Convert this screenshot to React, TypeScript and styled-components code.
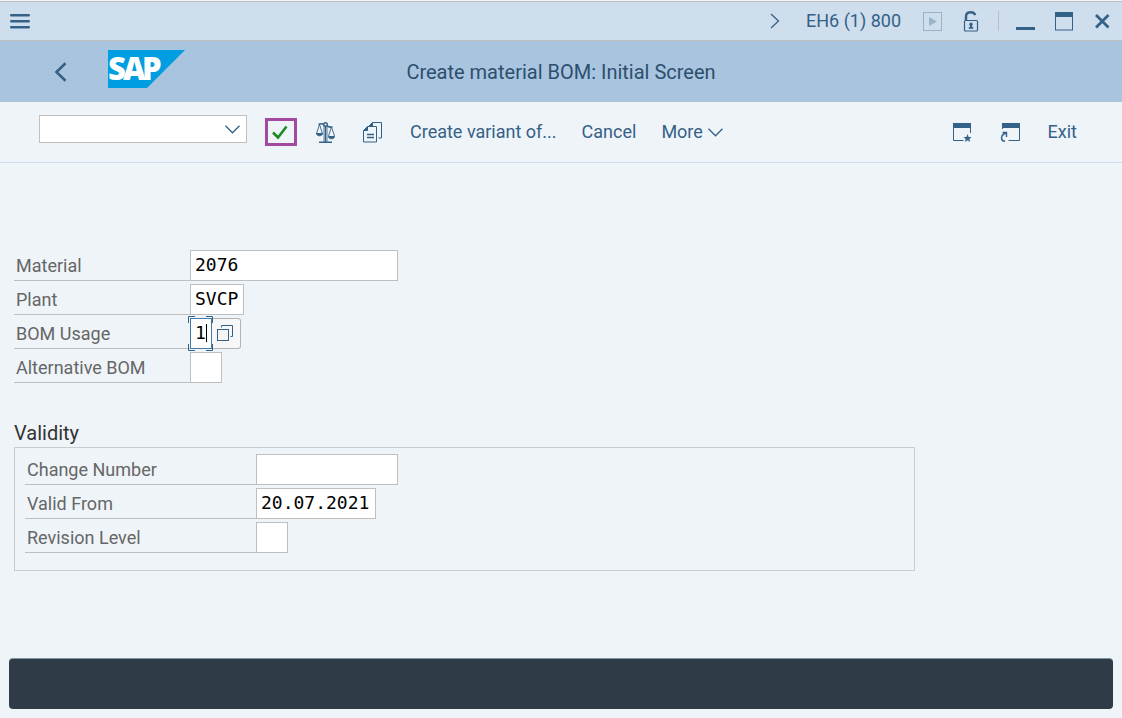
import React from "react";
import styled, { createGlobalStyle } from "styled-components";

const blue = "#346187";
const line = "#bfbfbf";

const GlobalStyle = createGlobalStyle`
  *, *::before, *::after { box-sizing: border-box; }
  body {
    margin: 0;
    background: #eff4f9;
    color: ${blue};
    font-family: Roboto, "Liberation Sans", sans-serif;
    font-size: 18px;
  }
  button, input, select { font: inherit; color: inherit; }
  svg { display: block; flex: none; }
`;

const Page = styled.div`
  display: flex;
  flex-direction: column;
  min-height: 100vh;
  padding-top: 1px;
`;

const SystemBar = styled.header`
  display: flex;
  align-items: center;
  justify-content: space-between;
  height: 40px;
  padding: 0 12px 0 10px;
  background: #cfdeec;
  border-top: 1px solid ${line};
  border-bottom: 1px solid ${line};
`;

const Group = styled.div<{ $gap: number }>`
  display: flex;
  align-items: center;
  gap: ${(p) => p.$gap}px;
`;

const PlainButton = styled.button`
  display: flex;
  align-items: center;
  gap: 5px;
  padding: 0;
  border: 0;
  background: none;
  line-height: 24px;
  white-space: nowrap;
  cursor: pointer;
`;

const SystemName = styled.span`
  padding: 0 2px 0 6px;
  line-height: 24px;
  white-space: nowrap;
`;

const Divider = styled.span`
  width: 1px;
  height: 20px;
  margin: 0 -3px 0 -2px;
  background: ${line};
`;

const TitleBar = styled.div`
  display: grid;
  grid-template-columns: 1fr auto 1fr;
  align-items: center;
  height: 61px;
  padding: 0 54px;
  background: #a9c4de;
`;

const Title = styled.h1`
  margin: 0;
  color: #2c4f6e;
  font-size: 20px;
  font-weight: 400;
  line-height: 24px;
`;

const Toolbar = styled.nav`
  display: flex;
  align-items: center;
  justify-content: space-between;
  height: 61px;
  padding: 0 45px 0 39px;
  border-bottom: 1px solid #cfdeec;
`;

const CommandBox = styled.div`
  display: grid;
  align-items: center;
  margin-bottom: 6px;
  > * { grid-area: 1 / 1; }
  > svg { justify-self: end; margin-right: 7px; pointer-events: none; }
`;

const CommandSelect = styled.select`
  appearance: none;
  width: 208px;
  height: 28px;
  padding: 0 28px 0 5px;
  border: 1px solid ${line};
  border-radius: 0;
  background: #fff;
`;

const ConfirmButton = styled(PlainButton)`
  justify-content: center;
  width: 32px;
  height: 28px;
  padding-right: 2px;
  border: 3px solid #a349a4;
`;

const Main = styled.main`
  display: flex;
  flex: 1;
  flex-direction: column;
  padding: 87px 14px 0;
`;

const Fields = styled.div`
  display: flex;
  flex-direction: column;
  gap: 3px;
`;

const Row = styled.div`
  display: flex;
  height: 31px;
`;

const Label = styled.label<{ $width: number }>`
  width: ${(p) => p.$width}px;
  padding-left: 2px;
  border-bottom: 1px solid ${line};
  color: #666;
  line-height: 31px;
`;

const Field = styled.input<{ $width: number; $focused?: boolean }>`
  width: ${(p) => p.$width}px;
  height: 31px;
  padding: 0 0 2px 4px;
  border: 1px solid ${(p) => (p.$focused ? "#427cac" : line)};
  border-radius: 0;
  outline: 0;
  background: #fff;
  color: #000;
  font-family: "DejaVu Sans Mono", monospace;
`;

const FocusFrame = styled.div`
  position: relative;
  display: flex;
  > svg { position: absolute; top: -2px; left: -2px; pointer-events: none; }
`;

const HelpButton = styled(PlainButton)`
  justify-content: center;
  width: 29px;
  height: 31px;
  padding-right: 2px;
  border: 1px solid #b3b3b3;
  border-left: 0;
  border-radius: 0 3px 3px 0;
  background: #f7f7f7;
`;

const LogoDrawing = styled.svg`
  margin-bottom: 5px;
`;

const SectionTitle = styled.h2`
  margin: 38px 0 2px;
  color: #333;
  font-size: 20px;
  font-weight: 400;
  line-height: 24px;
`;

const Panel = styled.section`
  width: 100%;
  max-width: 901px;
  padding: 6px 10px 17px;
  border: 1px solid #ccc;
`;

const StatusBar = styled.footer`
  height: 51px;
  margin: 20px 9px 9px;
  border-top: 1px solid #8195a0;
  border-radius: 4px;
  background: #2f3c48;
`;

const Chevron = () => (
  <svg width="15" height="9" viewBox="0 0 15 9" fill="none" stroke={blue} strokeWidth="1.3">
    <path d="M.5.8l7 7 7-7" />
  </svg>
);

const Logo = () => (
  <LogoDrawing width="77" height="38" viewBox="0 0 77 38" role="img" aria-label="SAP">
    <path d="M0 0h77L39 38H0z" fill="#009de0" />
    <text x="0 15 34" y="30" fill="#fff" fontFamily="Open Sans" fontWeight="800" fontSize="31">SAP</text>
  </LogoDrawing>
);

const Scales = () => (
  <svg width="20" height="21" viewBox="-1 0 20 21" fill="none" stroke={blue}>
    <path d="M9.500 4v16M3 20.300h13" strokeWidth="1.400" />
    <path d="M8 4v16M11 4v16" strokeWidth=".8" />
    <circle cx="9.500" cy="2.500" r="1.800" strokeWidth="1.400" />
    <path d="M8 2.800C6 1 4.500 1.500 2.500 2.500M11 3.500c2 2.300 3.500 1.500 5.500 1.500" strokeWidth="1.600" />
    <path d="M3.500 2.500l-3 9M3.500 2.500l3 9M15.500 5l-3 9M15.500 5l3 9" strokeWidth=".9" />
    <path d="M.5 11.500h6c0 3-6 3-6 0zM12.500 14.500h6c0 3-6 3-6 0z" fill={blue} />
  </svg>
);

const CopyPages = () => (
  <svg width="19" height="21" viewBox="0 0 19 21" fill="none" stroke={blue}>
    <path d="M6.500 3.500l3-3h9v15.500h-3" />
    <path d="M6 4L9.500.5V4z" fill={blue} />
    <path d="M4.500 4.500h9v15.500h-13v-11.500z" />
    <path d="M.5 8.500l4-4v4z" fill={blue} />
    <path d="M4 12.500h7M4 15.500h7" strokeWidth="1.300" />
  </svg>
);

const Lock = () => (
  <svg width="17" height="21" viewBox="0 0 17 21" fill="none" stroke={blue}>
    <path d="M3 9.500V5.500C3 .2 11 0 12.200 4.200" strokeWidth="2.400" />
    <rect x="1.500" y="9.500" width="13" height="10.500" rx="1" strokeWidth="1.200" />
    <path d="M8 11.500a1.900 1.900 0 0 1 1 3.400v1.100h1.200v1.800H5.800V16H7v-1.100a1.900 1.900 0 0 1 1-3.400z" fill={blue} stroke="none" />
  </svg>
);

export default function App() {
  return (
    <>
      <GlobalStyle />
      <Page>
        <SystemBar>
          <PlainButton aria-label="Menu">
            <svg width="20" height="15" viewBox="0 0 20 15" stroke={blue} strokeWidth="2.400" strokeLinecap="round">
              <path d="M1.200 1.300h17.600M1.200 7.300h17.600M1.200 13.300h17.600" />
            </svg>
          </PlainButton>
          <Group $gap={20}>
            <PlainButton aria-label="Expand">
              <svg width="10" height="16" viewBox="0 0 10 16" fill="none" stroke={blue} strokeWidth="1.300">
                <path d="M1 1l7.500 7L1 15" />
              </svg>
            </PlainButton>
            <SystemName>EH6 (1) 800</SystemName>
            <PlainButton aria-label="Run" disabled>
              <svg width="20" height="20" viewBox="0 0 20 20" fill="none" stroke="#9bb3c8">
                <rect x=".5" y="1.500" width="18" height="18" />
                <path d="M6 6l8 4.500L6 15z" fill="#9bb3c8" stroke="none" />
              </svg>
            </PlainButton>
            <PlainButton aria-label="Unlock"><Lock /></PlainButton>
            <Divider />
            <PlainButton aria-label="Minimize">
              <svg width="19" height="19" viewBox="0 0 19 19"><path d="M0 15h19v3H0z" fill={blue} /></svg>
            </PlainButton>
            <PlainButton aria-label="Maximize">
              <svg width="20" height="19" viewBox="0 0 20 19">
                <rect x=".5" y=".5" width="17" height="17.500" fill="none" stroke={blue} />
                <path d="M0 0h18v5H0z" fill={blue} />
              </svg>
            </PlainButton>
            <PlainButton aria-label="Close">
              <svg width="15" height="15" viewBox="0 0 15 15" stroke={blue} strokeWidth="2.800">
                <path d="M1 1l12.500 12.500M13.500 1L1 13.500" />
              </svg>
            </PlainButton>
          </Group>
        </SystemBar>

        <TitleBar>
          <Group $gap={41}>
            <PlainButton aria-label="Back">
              <svg width="13" height="20" viewBox="0 0 13 20" fill="none" stroke={blue} strokeWidth="2.600">
                <path d="M11.500 1.200L2.500 10l9 8.800" />
              </svg>
            </PlainButton>
            <Logo />
          </Group>
          <Title>Create material BOM: Initial Screen</Title>
        </TitleBar>

        <Toolbar>
          <Group $gap={25}>
            <Group $gap={18}>
              <CommandBox>
                <CommandSelect aria-label="Command" defaultValue="">
                  <option value="" />
                </CommandSelect>
                <Chevron />
              </CommandBox>
              <ConfirmButton aria-label="Enter">
                <svg width="16" height="15" viewBox="0 0 16 15" fill="none" stroke="#1d8a20" strokeWidth="2.500">
                  <path d="M1 7.500l5 5L14.500 1.500" />
                </svg>
              </ConfirmButton>
              <Group $gap={28}>
                <PlainButton aria-label="Compare"><Scales /></PlainButton>
                <PlainButton aria-label="Copy from"><CopyPages /></PlainButton>
                <PlainButton>Create variant of...</PlainButton>
              </Group>
            </Group>
            <PlainButton>Cancel</PlainButton>
            <PlainButton>More <Chevron /></PlainButton>
          </Group>
          <Group $gap={28}>
            <PlainButton aria-label="New window">
              <svg width="19" height="20" viewBox="0 0 19 20" fill="none" stroke={blue}>
                <path d="M10.500 18.500H.5V1.500h17V11" />
                <path d="M0 1h18v5H0z" fill={blue} stroke="none" />
                <path d="M14.500 12l1.100 2.900 3.100.1-2.400 1.900.8 3-2.600-1.700-2.600 1.700.8-3-2.400-1.900 3.100-.1z" fill={blue} stroke="none" />
              </svg>
            </PlainButton>
            <PlainButton aria-label="Create shortcut">
              <svg width="20" height="20" viewBox="0 0 20 20" fill="none" stroke={blue}>
                <path d="M2.500 7V1.500h17V18.500H8.500" />
                <path d="M2 1h18v5H2z" fill={blue} stroke="none" />
                <path d="M5 19.500C0 18.500.500 13 6 11M2.500 10.500h4v4.500" strokeWidth="1.400" />
              </svg>
            </PlainButton>
            <PlainButton>Exit</PlainButton>
          </Group>
        </Toolbar>

        <Main>
          <Fields>
            <Row>
              <Label $width={176} htmlFor="material">Material</Label>
              <Field $width={208} id="material" defaultValue="2076" />
            </Row>
            <Row>
              <Label $width={176} htmlFor="plant">Plant</Label>
              <Field $width={54} id="plant" defaultValue="SVCP" />
            </Row>
            <Row>
              <Label $width={176} htmlFor="usage">BOM Usage</Label>
              <FocusFrame>
                <Field $width={22} $focused id="usage" defaultValue="1" />
                <svg width="26" height="35" viewBox="0 0 26 35" fill="none" stroke={blue}>
                  <path d="M.5 7V.5H7M18 .5h6.500V7M24.500 28v6.500H18M7 34.500H.5V28" />
                  <path d="M18.500 8v18" stroke="#000" />
                </svg>
              </FocusFrame>
              <HelpButton aria-label="Value help">
                <svg width="17" height="17" viewBox="0 0 17 17" fill="none" stroke={blue}>
                  <path d="M4.500 2.500v-2h11v11h-2" />
                  <rect x=".5" y="4.500" width="11" height="11" />
                </svg>
              </HelpButton>
            </Row>
            <Row>
              <Label $width={176} htmlFor="alternative">Alternative BOM</Label>
              <Field $width={32} id="alternative" />
            </Row>
          </Fields>

          <SectionTitle>Validity</SectionTitle>
          <Panel aria-label="Validity">
            <Fields>
              <Row>
                <Label $width={231} htmlFor="change">Change Number</Label>
                <Field $width={142} id="change" />
              </Row>
              <Row>
                <Label $width={231} htmlFor="from">Valid From</Label>
                <Field $width={120} id="from" defaultValue="20.07.2021" />
              </Row>
              <Row>
                <Label $width={231} htmlFor="revision">Revision Level</Label>
                <Field $width={32} id="revision" />
              </Row>
            </Fields>
          </Panel>
        </Main>
        <StatusBar role="status" />
      </Page>
    </>
  );
}
